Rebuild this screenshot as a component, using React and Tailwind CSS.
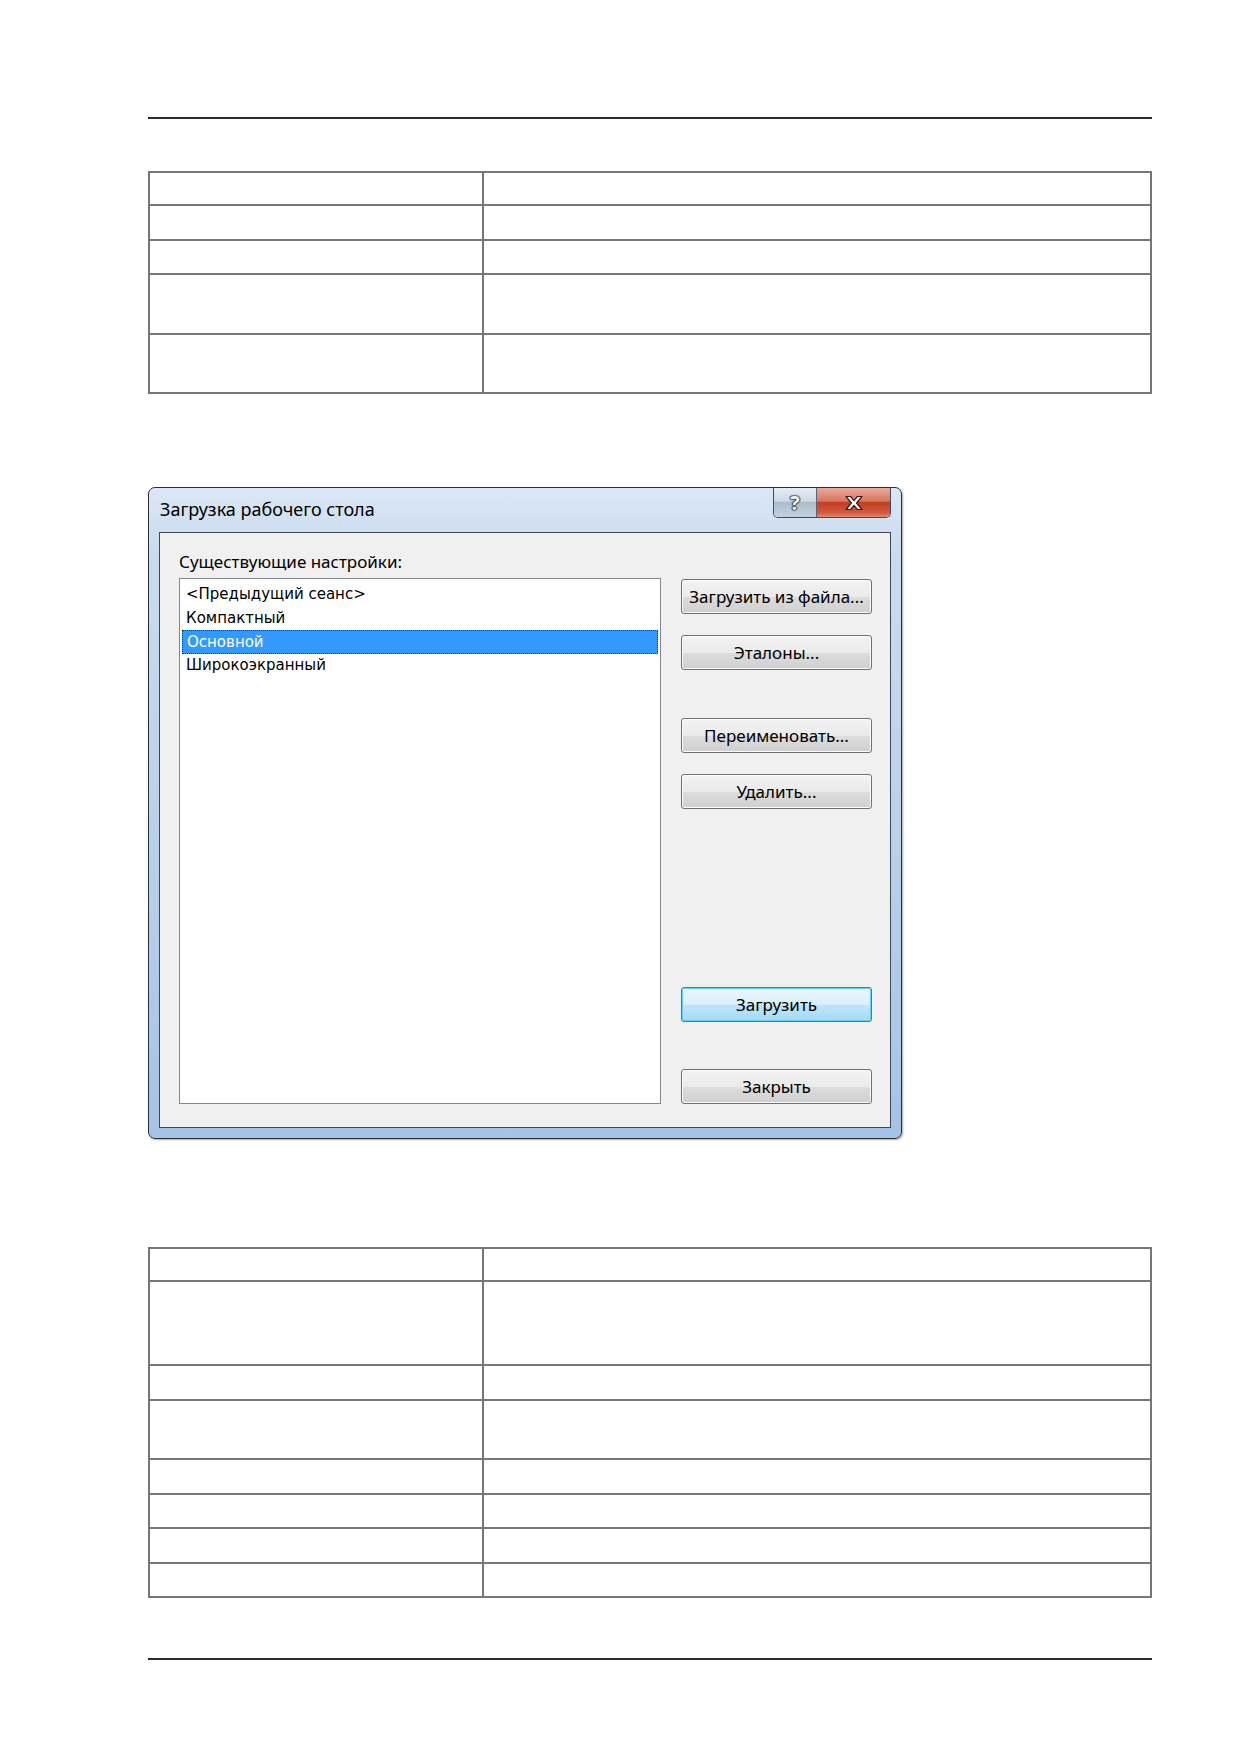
import React from 'react';

const topRows = [33, 35, 34, 60, 59];
const bottomRows = [33, 84, 35, 59, 35, 34, 35, 34];

const presets = ['<Предыдущий сеанс>', 'Компактный', 'Основной', 'Широкоэкранный'];

const winFont = { fontFamily: '"Noto Sans", "Open Sans", sans-serif' };

// empty two-column table, row heights in px
const GridTable = ({ rows }) => (
  <table className="w-full border-collapse">
    <tbody>
      {rows.map((h, i) => (
        <tr key={i} style={{ height: h }}>
          <td className="w-[334px] border-2 border-[#767676]"></td>
          <td className="border-2 border-[#767676]"></td>
        </tr>
      ))}
    </tbody>
  </table>
);

const WinButton = ({ children, primary, className = '' }) => (
  <button
    className={
      'h-[35px] w-[191px] rounded-[3px] border text-[17px] leading-none text-black ' +
      (primary
        ? 'border-[#3c7fb1] bg-[linear-gradient(to_bottom,#eaf6fd_0%,#d9f0fc_50%,#bee6fd_51%,#a7d9f5_100%)] shadow-[inset_0_0_0_1px_#5fd0f8] '
        : 'border-[#707070] bg-[linear-gradient(to_bottom,#f2f2f2_0%,#ebebeb_50%,#dddddd_51%,#cfcfcf_100%)] shadow-[inset_0_0_0_1px_#fbfbfb] ') +
      className
    }
    style={winFont}
  >
    {children}
  </button>
);

const CaptionButtons = () => (
  <div className="flex h-[30px] overflow-hidden rounded-b-[5px] border border-t-0 border-[#3f4b5b]">
    <div className="flex w-[43px] items-center justify-center border-r border-[#5a6678] bg-[linear-gradient(to_bottom,#e6ecf2_0%,#cfd9e4_45%,#aebdcd_50%,#c3d0de_100%)]">
      <span className="text-[20px] font-extrabold leading-none text-[#eef1f4] [text-shadow:0_0_1px_#0d1622,0_0_1px_#0d1622,0_0_1px_#0d1622,0_0_1px_#0d1622,0_0_2px_#0d1622]" style={winFont}>
        ?
      </span>
    </div>
    <div className="flex w-[73px] items-center justify-center bg-[linear-gradient(to_bottom,#e9a99b_0%,#d9765f_45%,#c43e24_50%,#d15a3e_85%,#e08a6f_100%)]">
      <svg width="20" height="16" viewBox="0 0 20 16">
        <path d="M2 1.5h4.6L10 5.6l3.4-4.1H18l-5.4 6.5 5.4 6.5h-4.6L10 10.4l-3.4 4.1H2l5.4-6.5z" fill="#fff" stroke="#3a1a14" strokeWidth="1.2" strokeLinejoin="round" />
      </svg>
    </div>
  </div>
);

const LoadDesktopDialog = () => (
  <div className="flex h-[652px] w-[754px] flex-col rounded-[7px] border border-[#2b2f36] bg-[linear-gradient(to_bottom,#dbe7f4_0%,#c9dbef_10%,#b9d0ea_55%,#a5c3e6_100%)] px-[10px] pb-[10px] shadow-[1px_1px_2px_rgba(0,0,0,0.35)]">
    <div className="flex h-[44px] items-start justify-between">
      <span className="mt-[8px] pl-[1px] text-[18px] text-black" style={winFont}>
        Загрузка рабочего стола
      </span>
      <CaptionButtons />
    </div>
    <div className="flex flex-1 border border-[#3d4856] bg-[#f0f0f0] pl-[19px] pr-[18px] pb-[23px]">
      <div className="flex w-[482px] flex-col">
        <div className="mt-[19px] h-[26px] text-[17px] leading-[20px] text-black" style={winFont}>
          Существующие настройки:
        </div>
        <div className="flex-1 border border-[#828790] bg-white px-[2px] pt-[4px]">
          {presets.map((p) => (
            <div
              key={p}
              className={
                'h-[23.5px] pl-[4px] leading-[22px] ' +
                (p === 'Основной'
                  ? 'border border-dotted border-[#4a3410] bg-[#3399ff] pl-[3px] leading-[20px] text-white'
                  : 'text-black')
              }
              style={{ fontFamily: '"DejaVu Sans", Verdana, sans-serif', fontSize: 15 }}
            >
              {p}
            </div>
          ))}
        </div>
      </div>
      <div className="ml-[20px] flex flex-col pt-[46px]">
        <WinButton>Загрузить из файла...</WinButton>
        <WinButton className="mt-[21px]">Эталоны...</WinButton>
        <WinButton className="mt-[48px]">Переименовать...</WinButton>
        <WinButton className="mt-[21px]">Удалить...</WinButton>
        <WinButton primary className="mt-[178px]">Загрузить</WinButton>
        <WinButton className="mt-auto">Закрыть</WinButton>
      </div>
    </div>
  </div>
);

export default function App() {
  return (
    <div className="h-[1754px] w-[1240px] bg-white pl-[148px] pt-[117px]">
      <div className="w-[1004px]">
        <div className="h-[2px] bg-[#2a2a2a]"></div>
        <div className="mt-[52px]">
          <GridTable rows={topRows} />
        </div>
        <div className="mt-[93px]">
          <LoadDesktopDialog />
        </div>
        <div className="mt-[108px]">
          <GridTable rows={bottomRows} />
        </div>
        <div className="mt-[60px] h-[2px] bg-[#2a2a2a]"></div>
      </div>
    </div>
  );
}
